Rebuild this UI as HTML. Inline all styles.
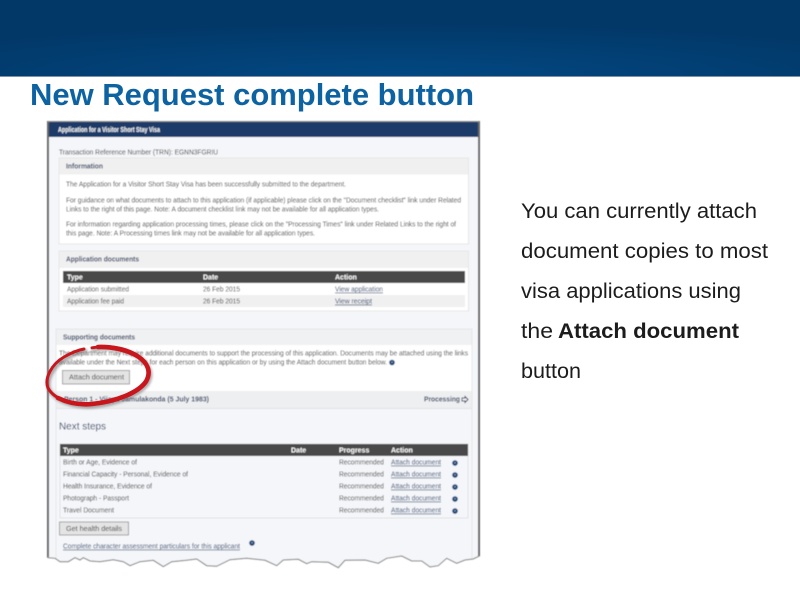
<!DOCTYPE html>
<html>
<head>
<meta charset="utf-8">
<title>New Request complete button</title>
<style>
html,body{margin:0;padding:0;background:#fff;width:800px;height:600px;overflow:hidden}
svg{position:absolute;left:0;top:0;display:block}
text{font-family:"Liberation Sans",Arial,sans-serif}
.t{font-size:7px;fill:#3c3c3c}
.b{font-size:7px;font-weight:bold;fill:#2f3e62}
.h{font-size:7px;font-weight:bold;fill:#fff}
.l{font-size:7px;fill:#2a3f6a;text-decoration:underline}
.r{font-size:21px;fill:#1c1c1c}
</style>
</head>
<body>
<svg width="800" height="600" viewBox="0 0 800 600" xmlns="http://www.w3.org/2000/svg">
<defs>
<radialGradient id="hd" cx="50%" cy="100%" r="70%">
<stop offset="0" stop-color="#024882"/>
<stop offset="1" stop-color="#023868"/>
</radialGradient>
<filter id="bl" x="-5%" y="-5%" width="110%" height="110%"><feGaussianBlur stdDeviation="0.42"/></filter>
<filter id="bs" x="-5%" y="-5%" width="110%" height="110%"><feGaussianBlur stdDeviation="0.3"/></filter>
<filter id="sh" x="-10%" y="-10%" width="120%" height="120%"><feGaussianBlur stdDeviation="1.3"/></filter>
<g id="q"><circle r="2.8" fill="#143f72"/><circle cx="0" cy="-0.2" r="0.9" fill="#7f9fc0"/></g>
</defs>

<rect width="800" height="76" fill="url(#hd)"/>
<rect y="76" width="800" height="1" fill="#7f8fa5"/>

<text x="30" y="105" font-size="31" font-weight="bold" fill="#0c62a2" textLength="444" lengthAdjust="spacingAndGlyphs" filter="url(#bs)">New Request complete button</text>

<g filter="url(#bl)">
<!-- panel -->
<rect x="48" y="121" width="431" height="440" fill="#f4f6f9"/>
<rect x="47" y="121" width="2" height="436" fill="#666"/>
<rect x="478" y="121" width="2" height="435" fill="#666"/>
<rect x="48" y="121" width="431" height="1.5" fill="#8a8a8a"/>
<rect x="49" y="122" width="429" height="15" fill="#1b3a67"/>
<text x="58" y="132" class="h" textLength="102" lengthAdjust="spacingAndGlyphs">Application for a Visitor Short Stay Visa</text>

<text x="59" y="154.500" class="t" textLength="159" lengthAdjust="spacingAndGlyphs">Transaction Reference Number (TRN): EGNN3FGRIU</text>

<!-- Information -->
<rect x="59" y="158" width="409.500" height="86" fill="#fff" stroke="#e6e6e6"/>
<rect x="59.500" y="158.500" width="408.500" height="16" fill="#f0f0f0"/>
<text x="66" y="168.500" class="b" textLength="37" lengthAdjust="spacingAndGlyphs">Information</text>
<text x="66" y="186.500" class="t" textLength="280" lengthAdjust="spacingAndGlyphs">The Application for a Visitor Short Stay Visa has been successfully submitted to the department.</text>
<text x="66" y="202.500" class="t" textLength="395" lengthAdjust="spacingAndGlyphs">For guidance on what documents to attach to this application (if applicable) please click on the "Document checklist" link under Related</text>
<text x="66" y="211.500" class="t" textLength="313" lengthAdjust="spacingAndGlyphs">Links to the right of this page. Note: A document checklist link may not be available for all application types.</text>
<text x="66" y="226.500" class="t" textLength="390" lengthAdjust="spacingAndGlyphs">For information regarding application processing times, please click on the "Processing Times" link under Related Links to the right of</text>
<text x="66" y="235.500" class="t" textLength="249" lengthAdjust="spacingAndGlyphs">this page. Note: A Processing times link may not be available for all application types.</text>

<!-- Application documents -->
<rect x="59" y="251" width="409.500" height="60" fill="#fff" stroke="#e6e6e6"/>
<rect x="59.500" y="251.500" width="408.500" height="16.500" fill="#f0f0f0"/>
<text x="66" y="261.500" class="b" textLength="73" lengthAdjust="spacingAndGlyphs">Application documents</text>
<rect x="63" y="271" width="402" height="12" fill="#4a4a4a"/>
<text x="67" y="279.500" class="h">Type</text>
<text x="203" y="279.500" class="h">Date</text>
<text x="335" y="279.500" class="h">Action</text>
<rect x="63" y="295" width="402" height="12" fill="#f0f0f0"/>
<text x="67" y="291.500" class="t" textLength="62" lengthAdjust="spacingAndGlyphs">Application submitted</text>
<text x="203" y="291.500" class="t" textLength="37" lengthAdjust="spacingAndGlyphs">26 Feb 2015</text>
<text x="335" y="291.500" class="l" textLength="48" lengthAdjust="spacingAndGlyphs">View application</text>
<text x="67" y="303.500" class="t" textLength="57" lengthAdjust="spacingAndGlyphs">Application fee paid</text>
<text x="203" y="303.500" class="t" textLength="37" lengthAdjust="spacingAndGlyphs">26 Feb 2015</text>
<text x="335" y="303.500" class="l" textLength="37" lengthAdjust="spacingAndGlyphs">View receipt</text>

<!-- Supporting documents -->
<rect x="56" y="329" width="416" height="238" fill="#f4f6f9" stroke="#e4e6ea"/>
<rect x="56.500" y="329.500" width="415" height="15.500" fill="#f0f1f2"/>
<rect x="56.500" y="345" width="415" height="46" fill="#fff"/>
<text x="63" y="339.500" class="b" textLength="72" lengthAdjust="spacingAndGlyphs">Supporting documents</text>
<text x="59" y="355.500" class="t" textLength="409" lengthAdjust="spacingAndGlyphs">The Department may require additional documents to support the processing of this application. Documents may be attached using the links</text>
<text x="59" y="364.500" class="t" textLength="328" lengthAdjust="spacingAndGlyphs">available under the Next steps for each person on this application or by using the Attach document button below.</text>
<use href="#q" x="392" y="362.500"/>
<rect x="62.500" y="370.500" width="67" height="13.500" fill="#e4e4e4" stroke="#a0a0a0"/>
<text x="69" y="379.500" class="t" style="font-size:7.500px" textLength="55" lengthAdjust="spacingAndGlyphs">Attach document</text>

<rect x="56.500" y="391" width="415" height="17" fill="#eeeff0"/>
<rect x="56.500" y="408" width="415" height="1" fill="#e0e2e6"/>
<text x="64" y="401.500" class="b" textLength="145" lengthAdjust="spacingAndGlyphs">Person 1 - Vijaya Jamulakonda (5 July 1983)</text>
<text x="424" y="401.500" class="b" textLength="36" lengthAdjust="spacingAndGlyphs">Processing</text>
<path d="M468 399.500l-3-3v1.500h-3v3h3v1.500z" fill="none" stroke="#2f3e62" stroke-width="0.900"/>

<!-- Next steps -->
<text x="59" y="429.500" font-size="10" fill="#2f3e62" textLength="47" lengthAdjust="spacingAndGlyphs">Next steps</text>
<rect x="60" y="444" width="408" height="74" fill="#f4f6f9" stroke="#e0e2e6"/>
<rect x="60" y="444" width="408" height="12" fill="#4a4a4a"/>
<text x="63" y="452.500" class="h">Type</text>
<text x="291" y="452.500" class="h">Date</text>
<text x="339" y="452.500" class="h">Progress</text>
<text x="391" y="452.500" class="h">Action</text>

<text x="63" y="464.500" class="t" textLength="74" lengthAdjust="spacingAndGlyphs">Birth or Age, Evidence of</text>
<text x="63" y="476.500" class="t" textLength="125" lengthAdjust="spacingAndGlyphs">Financial Capacity - Personal, Evidence of</text>
<text x="63" y="488.500" class="t" textLength="89" lengthAdjust="spacingAndGlyphs">Health Insurance, Evidence of</text>
<text x="63" y="500.500" class="t" textLength="66" lengthAdjust="spacingAndGlyphs">Photograph - Passport</text>
<text x="63" y="512.500" class="t" textLength="51" lengthAdjust="spacingAndGlyphs">Travel Document</text>

<text x="339" y="464.500" class="t" textLength="45" lengthAdjust="spacingAndGlyphs">Recommended</text>
<text x="339" y="476.500" class="t" textLength="45" lengthAdjust="spacingAndGlyphs">Recommended</text>
<text x="339" y="488.500" class="t" textLength="45" lengthAdjust="spacingAndGlyphs">Recommended</text>
<text x="339" y="500.500" class="t" textLength="45" lengthAdjust="spacingAndGlyphs">Recommended</text>
<text x="339" y="512.500" class="t" textLength="45" lengthAdjust="spacingAndGlyphs">Recommended</text>

<text x="391" y="464.500" class="l" textLength="50" lengthAdjust="spacingAndGlyphs">Attach document</text>
<text x="391" y="476.500" class="l" textLength="50" lengthAdjust="spacingAndGlyphs">Attach document</text>
<text x="391" y="488.500" class="l" textLength="50" lengthAdjust="spacingAndGlyphs">Attach document</text>
<text x="391" y="500.500" class="l" textLength="50" lengthAdjust="spacingAndGlyphs">Attach document</text>
<text x="391" y="512.500" class="l" textLength="50" lengthAdjust="spacingAndGlyphs">Attach document</text>

<use href="#q" x="455" y="463"/>
<use href="#q" x="455" y="475"/>
<use href="#q" x="455" y="487"/>
<use href="#q" x="455" y="499"/>
<use href="#q" x="455" y="511"/>

<rect x="59.500" y="522" width="69" height="13" fill="#e4e4e4" stroke="#a0a0a0"/>
<text x="66" y="531" class="t" style="font-size:7.500px" textLength="56" lengthAdjust="spacingAndGlyphs">Get health details</text>
<text x="63" y="548.500" class="l" textLength="177" lengthAdjust="spacingAndGlyphs">Complete character assessment particulars for this applicant</text>
<use href="#q" x="252" y="543"/>

<!-- torn edge: white below, grey line on the edge only -->
<path d="M47 557 48.300 557.700 55 558.300 60 561.700 68.300 561.700 75 557.700 80 560 83.300 557.700 90 561 100 561.700 113.300 559.700 123.300 561.700 130 565.700 140 561.700 153.300 560.300 163.300 566.700 171.700 561.700 186.700 560.300 196.700 559 206.700 565.700 216.700 566.300 230 559.700 246.700 558.300 265 560.300 276.700 565.700 283.300 560 298.300 559.300 306.700 563.700 311.700 561.700 328.300 562.300 338.300 567.700 345 560.300 365 560 378.300 563.300 386.700 558.300 401.700 556 411.700 561 421.700 561 430 567 438.300 565.700 446.700 558.300 456.700 563.300 465 560 473.300 559 480 555.700V580H47Z" fill="#fff"/>
<path d="M47 557 48.300 557.700 55 558.300 60 561.700 68.300 561.700 75 557.700 80 560 83.300 557.700 90 561 100 561.700 113.300 559.700 123.300 561.700 130 565.700 140 561.700 153.300 560.300 163.300 566.700 171.700 561.700 186.700 560.300 196.700 559 206.700 565.700 216.700 566.300 230 559.700 246.700 558.300 265 560.300 276.700 565.700 283.300 560 298.300 559.300 306.700 563.700 311.700 561.700 328.300 562.300 338.300 567.700 345 560.300 365 560 378.300 563.300 386.700 558.300 401.700 556 411.700 561 421.700 561 430 567 438.300 565.700 446.700 558.300 456.700 563.300 465 560 473.300 559 480 555.700" fill="none" stroke="#777" stroke-width="1"/>
</g>

<!-- red circle -->
<path d="M92 347.800C106 345 124 347 137 355C148 362 152 372 146 382C138 393 116 402 92 404.500C72 406 54 399 48 388C44 378 52 364 64 357C71 353 78 350 84 349" fill="none" stroke="#666" stroke-width="4" stroke-linecap="round" opacity="0.550" transform="translate(1.500,2)" filter="url(#sh)"/>
<path d="M92 347.800C106 345 124 347 137 355C148 362 152 372 146 382C138 393 116 402 92 404.500C72 406 54 399 48 388C44 378 52 364 64 357C71 353 78 350 84 349" fill="none" stroke="#c9151b" stroke-width="3" stroke-linecap="round" filter="url(#bs)"/>
<path d="M98 347C112 346.500 128 350 138 356.500C148 363 151.500 372 146 381.500C138 393 116 401.500 92 404C80 405 68 403 58 398" fill="none" stroke="#c9151b" stroke-width="4.600" stroke-linecap="round" filter="url(#bs)"/>

<!-- right text -->
<g filter="url(#bs)">
<text x="521" y="218" class="r" textLength="236" lengthAdjust="spacingAndGlyphs">You can currently attach</text>
<text x="521" y="258" class="r" textLength="247" lengthAdjust="spacingAndGlyphs">document copies to most</text>
<text x="521" y="298" class="r" textLength="220" lengthAdjust="spacingAndGlyphs">visa applications using</text>
<text x="521" y="338" class="r" textLength="32" lengthAdjust="spacingAndGlyphs">the</text>
<text x="558" y="338" class="r" font-weight="bold" textLength="181" lengthAdjust="spacingAndGlyphs">Attach document</text>
<text x="521" y="378" class="r" textLength="60" lengthAdjust="spacingAndGlyphs">button</text>
</g>
</svg>
</body>
</html>
